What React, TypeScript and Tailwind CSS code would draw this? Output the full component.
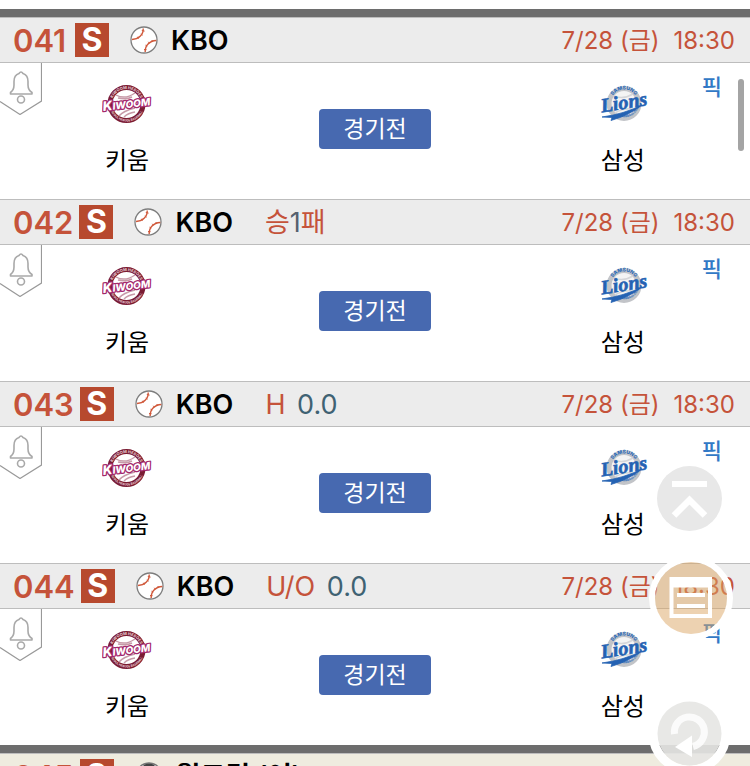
import React from "react";

type Game = {
  no: string;
  sport: "baseball" | "soccer";
  league: string;
  date: string;
  time: string;
  home: string;
  away: string;
  type?: React.ReactNode;
  special?: boolean;
};

const games: Game[] = [
  { no: "041", sport: "baseball", league: "KBO", date: "7/28 (금)", time: "18:30", home: "키움", away: "삼성" },
  {
    no: "042",
    sport: "baseball",
    league: "KBO",
    date: "7/28 (금)",
    time: "18:30",
    home: "키움",
    away: "삼성",
    type: (
      <>
        승<span className="text-[#56616f]">1</span>패
      </>
    ),
  },
  {
    no: "043",
    sport: "baseball",
    league: "KBO",
    date: "7/28 (금)",
    time: "18:30",
    home: "키움",
    away: "삼성",
    type: (
      <>
        H <span className="ml-1 text-[#3f6273]">0.0</span>
      </>
    ),
  },
  {
    no: "044",
    sport: "baseball",
    league: "KBO",
    date: "7/28 (금)",
    time: "18:30",
    home: "키움",
    away: "삼성",
    type: (
      <>
        U/O <span className="ml-1 text-[#3f6273]">0.0</span>
      </>
    ),
  },
];

function Baseball() {
  return (
    <svg viewBox="0 0 28 28" className="size-7 shrink-0" aria-hidden="true">
      <circle cx="14" cy="14" r="13" fill="#fff" stroke="#7d7d7d" strokeWidth="1.3" />
      <g fill="none" stroke="#d0583a" strokeWidth="1.4">
        <path d="M13.2 2.500 C13.500 9 8.500 13.200 2 13.500" />
        <path d="M26.300 14.500 C19.500 14.800 14.800 19.500 15.200 26" />
        <path d="M11.800 4.500l2.800 .6M10.800 8l1.800 1.200M7.500 10.800l1 1.800" strokeWidth="1" />
        <path d="M22 14l.4 2M18.300 15.800l1.200 1.500M15.500 19.200l1.800 1M14 23.500l2.600 .2" strokeWidth="1" />
      </g>
    </svg>
  );
}

function Soccer() {
  return (
    <svg viewBox="0 0 28 28" className="size-7 shrink-0" aria-hidden="true">
      <circle cx="14" cy="14" r="13" fill="#fff" stroke="#777" strokeWidth="1.3" />
      <path d="M8 3 Q14 0 20 3 L17 6 H11Z M14 9l5 4-2 6h-6l-2-6z M1 13l4 2 1 6z M27 13l-4 2-1 6z" fill="#444" />
    </svg>
  );
}

function KiwoomLogo() {
  return (
    <svg viewBox="0 0 50 40" className="h-10 w-[50px]" role="img" aria-label="Kiwoom Heroes">
      <defs>
        <path id="kiwoomTop" d="M9.5 20a15 15 0 0 1 30 0" />
        <path id="kiwoomBottom" d="M7.500 20a17.500 17.500 0 0 0 35 0" />
      </defs>
      <circle cx="24.500" cy="20" r="16.500" fill="#fff" stroke="#7a1c33" strokeWidth="5" />
      <path
        d="M14 11q9 5 19-2M16 14q8 2 14-1M17 32q4-5 16-8M22 33q4-4 11-5"
        fill="none"
        stroke="#c79aa8"
        strokeWidth="1.400"
      />
      <g fill="#e9cfd6" fontFamily="Inter, sans-serif" fontWeight="700" textAnchor="middle">
        <text fontSize="4">
          <textPath href="#kiwoomTop" startOffset="50%">
            KIWOOM HEROES
          </textPath>
        </text>
        <text fontSize="3">
          <textPath href="#kiwoomBottom" startOffset="50%">
            SEOUL HEROES BASEBALL
          </textPath>
        </text>
      </g>
      <text
        x="24.500"
        y="24"
        transform="rotate(-7 25 20)"
        textAnchor="middle"
        fontFamily="Inter, sans-serif"
        fontStyle="italic"
        fontWeight="800"
        fontSize="10"
        fill="#fff"
        stroke="#a3286c"
        strokeWidth="2.500"
        strokeLinejoin="round"
        paintOrder="stroke"
      >
        <tspan fontSize="13">K</tspan>IWOOM
      </text>
    </svg>
  );
}

function LionsLogo() {
  return (
    <svg viewBox="0 0 50 40" className="h-10 w-[50px]" role="img" aria-label="Samsung Lions">
      <defs>
        <path id="lionsTop" d="M12.500 19a13.500 13.500 0 0 1 27 0" />
        <path id="lionsBottom" d="M16 30a16.500 16.500 0 0 0 26 -10" />
      </defs>
      <circle cx="26" cy="19.500" r="15" fill="#f4f4f4" stroke="#c2c4c8" strokeWidth="5" />
      <path d="M16 12q9 4 19-2M17 29q8-5 18-4" fill="none" stroke="#d5d6d9" strokeWidth="1.500" />
      <g fill="#2f6cb8" fontFamily="Inter, sans-serif" fontWeight="800" textAnchor="middle">
        <text fontSize="5">
          <textPath href="#lionsTop" startOffset="50%">
            SAMSUNG
          </textPath>
        </text>
        <text fontSize="3">
          <textPath href="#lionsBottom" startOffset="55%">
            BASEBALL CLUB
          </textPath>
        </text>
      </g>
      <path d="M4 33Q26 30 44 21Q32 31 13 36.500L14 33.500Z" fill="#2462b3" stroke="#2462b3" strokeWidth=".8" />
      <text
        x="26"
        y="25"
        transform="rotate(-9 25 20)"
        textAnchor="middle"
        fontFamily="Liberation Serif, serif"
        fontStyle="italic"
        fontWeight="700"
        fontSize="20"
        fill="#2462b3"
        stroke="#2462b3"
        strokeWidth=".6"
      >
        Lions
      </text>
    </svg>
  );
}

function AlarmButton() {
  return (
    <button aria-label="알림" className="h-[52px] w-[42px] shrink-0">
      <svg viewBox="0 0 42 52" className="h-[52px] w-[42px]" fill="none">
        <path d="M41.500 0V38L20 51.500L0 38.500" stroke="#999" strokeWidth="1.200" />
        <path
          d="M10.500 31V29.500Q14 27 14 22V18.500Q14 12 19 10.500Q21 7.500 23 10.500Q28 12 28 18.500V22Q28 27 32 29.500V31Z"
          stroke="#a9a9a9"
          strokeWidth="1.600"
          strokeLinejoin="round"
        />
        <circle cx="21" cy="36.500" r="3.500" stroke="#a9a9a9" strokeWidth="1.600" />
      </svg>
    </button>
  );
}

function GameHeader({ game }: { game: Game }) {
  return (
    <header
      className={`flex h-[46px] items-center border-y border-[#bdbdbd] pl-[13px] pr-[15px] ${
        game.special ? "bg-[#efecdf]" : "bg-[#ececec]"
      }`}
    >
      <span className="min-w-14 text-[31px] font-semibold text-[#c5533a]">{game.no}</span>
      <span className="ml-1.5 flex size-[34px] items-center justify-center bg-[#b7492e] text-[32px] font-bold text-white">
        S
      </span>
      <span className="ml-[21px] flex items-center gap-[13px]">
        {game.sport === "baseball" ? <Baseball /> : <Soccer />}
        <span className="text-[27px] font-semibold">{game.league}</span>
      </span>
      {game.type && <span className="ml-8 text-[27px] text-[#c5533a]">{game.type}</span>}
      <time className="ml-auto flex gap-3.5 pt-0.5 text-2xl text-[#c5533a]">
        <span>{game.date}</span>
        <span>{game.time}</span>
      </time>
    </header>
  );
}

function Team({ name, children }: { name: string; children: React.ReactNode }) {
  return (
    <div className="flex flex-col items-center gap-[21px] pt-[21px]">
      {children}
      <span className="text-2xl">{name}</span>
    </div>
  );
}

function GameRow({ game }: { game: Game }) {
  return (
    <article>
      <GameHeader game={game} />
      <div className="grid h-[136px] grid-cols-[1fr_112px_1fr]">
        <div className="flex">
          <AlarmButton />
          <div className="ml-[60px]">
            <Team name={game.home}>
              <KiwoomLogo />
            </Team>
          </div>
        </div>
        <button className="mb-1 h-10 self-center rounded bg-[#4769b0] text-[23px] leading-none text-white">
          경기전
        </button>
        <div className="flex justify-end pr-7">
          <Team name={game.away}>
            <LionsLogo />
          </Team>
          <a href="#pick" className="ml-[54px] mt-[13px] text-[22px] font-medium text-[#3279c6]">
            픽
          </a>
        </div>
      </div>
    </article>
  );
}

function FloatingButtons() {
  return (
    <>
      {/* Scroll to top */}
      <button aria-label="맨 위로" className="fixed right-7 top-[466px] size-[65px] rounded-full bg-[#e8e8e8]">
        <svg viewBox="0 0 65 65" fill="none" stroke="#fff">
          <path d="M15 18H50" strokeWidth="6" />
          <path d="M17 49.500L32.500 34L48 49.500" strokeWidth="6.500" />
        </svg>
      </button>

      {/* Betting slip */}
      <button aria-label="구매 목록" className="fixed right-[17px] top-[556px] size-[84px]">
        <svg viewBox="0 0 84 84" fill="none">
          <circle cx="42" cy="42" r="39" stroke="#fff" strokeWidth="6" />
          <circle cx="42" cy="42" r="36" fill="#dba563" fillOpacity=".5" />
          <path d="M22.500 23H61V60H22.500Z" stroke="#fff" strokeWidth="4" />
          <path d="M21 26.500H63" stroke="#fff" strokeWidth="10" />
          <path d="M28 39H56M28 50H56" stroke="#fff" strokeWidth="4" />
        </svg>
      </button>

      {/* Refresh */}
      <button aria-label="새로고침" className="fixed right-[19px] top-[692px] size-[83px]">
        <svg viewBox="0 0 83 83" fill="none">
          <circle cx="41.500" cy="41.500" r="36.500" stroke="#fff" strokeWidth="9" />
          <circle cx="41.500" cy="41.500" r="32" fill="#e5e5e3" fillOpacity=".9" />
          <path d="M26.500 42A15 15 0 1 1 45 54.500" stroke="#fff" strokeOpacity=".85" strokeWidth="7" />
          <path d="M27 55L44 43.500V65Z" fill="#fff" />
        </svg>
      </button>
    </>
  );
}

export default function App() {
  return (
    <main className="h-screen overflow-hidden bg-white pt-[9px] font-[Inter,'Noto_Sans_CJK_KR',sans-serif] leading-none text-black">
      <section className="border-t-8 border-[#6d6d6d]">
        {games.map((game) => (
          <GameRow key={game.no} game={game} />
        ))}
      </section>
      <section className="border-t-8 border-[#6d6d6d]">
        <GameHeader
          game={{
            no: "045",
            sport: "soccer",
            league: "월드컵 (여)",
            date: "",
            time: "",
            home: "",
            away: "",
            special: true,
          }}
        />
      </section>
      {/* Scroll indicator */}
      <div className="fixed right-[6px] top-[79px] h-[72px] w-[6px] rounded-full bg-[#a4a4a4]" />
      <FloatingButtons />
    </main>
  );
}
